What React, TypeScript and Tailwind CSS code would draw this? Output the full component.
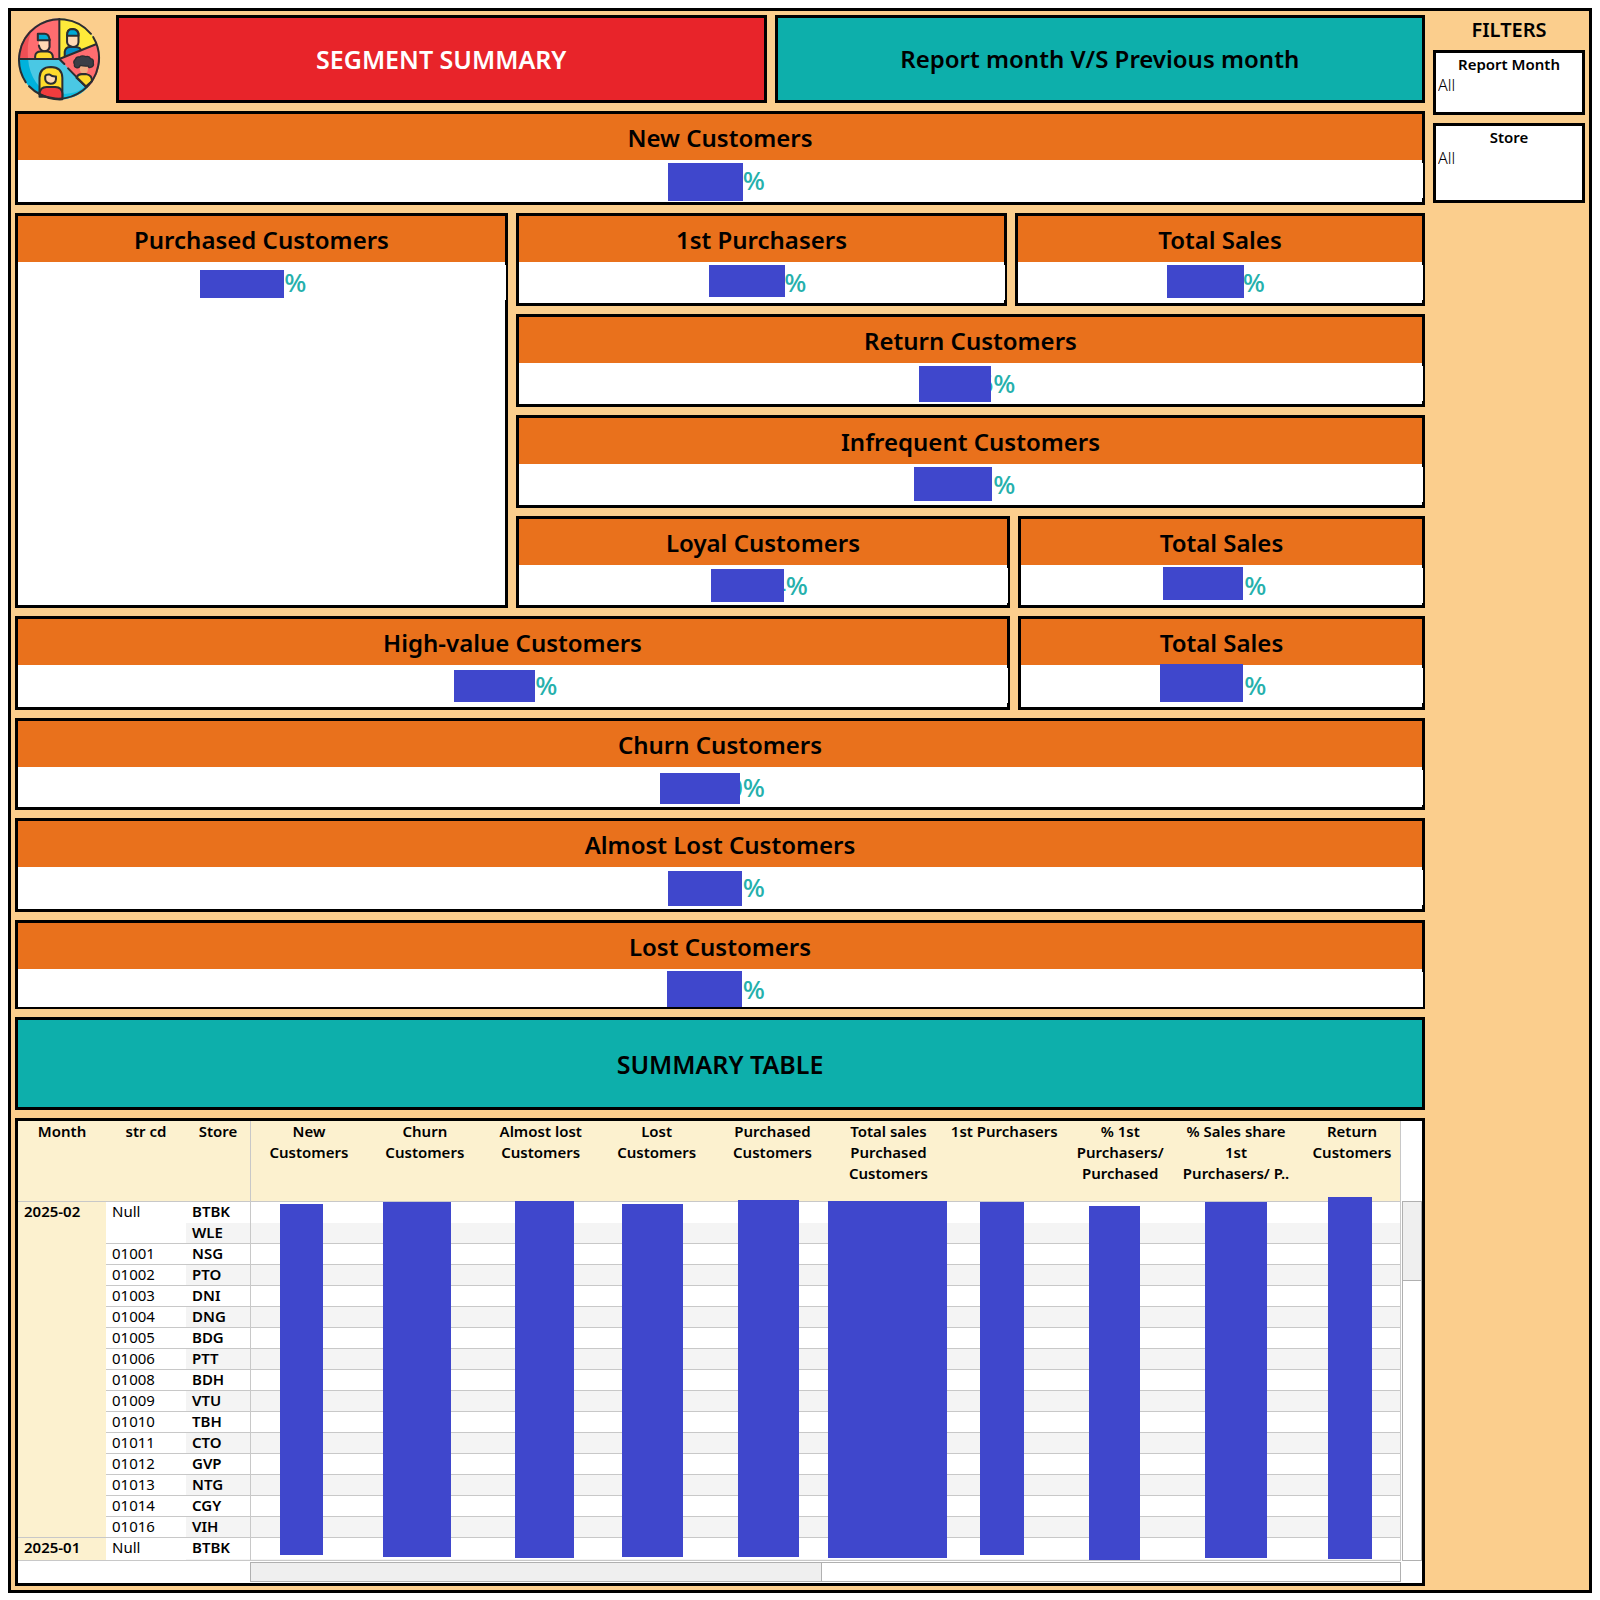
import React from "react";

type Mask = { left: number; top: number; width: number; height: number };

type CardProps = {
  title: string;
  value?: string;
  mask: Mask;
  bodyClass?: string;
  className?: string;
};

function MetricCard({ title, value = "%", mask, bodyClass = "h-[41px]", className = "" }: CardProps) {
  return (
    <section className={`min-w-0 border-[3px] border-black bg-white ${className}`}>
      <h2 className="h-[46px] bg-[#e9711c] text-center text-[24px] leading-[48px] font-semibold whitespace-nowrap">
        {title}
      </h2>
      <div className={bodyClass}>
        <div className="-mr-px h-[38px] pt-[3px]">
          <div className="mr-px h-[35px] bg-white shadow-[1px_0_0_#fff]">
            <div className="relative mx-auto w-[90px] text-right text-[26px] leading-[35px] font-medium text-[#25b0ac]">
              {value}
              <span
                className="absolute bg-[#3f47cc]"
                style={{ left: mask.left, top: mask.top - 3, width: mask.width, height: mask.height }}
              />
            </div>
          </div>
        </div>
      </div>
    </section>
  );
}

function Logo() {
  return (
    <svg viewBox="23 23 250 250" className="h-[84px] w-[84px]" role="img" aria-label="Customer segments">
      <defs>
        <clipPath id="disc">
          <circle cx="148" cy="148" r="121" />
        </clipPath>
      </defs>
      <g clipPath="url(#disc)">
        <rect x="20" y="20" width="256" height="256" fill="#4ac8e4" />
        <path d="M20 148H56C60 205 92 245 150 276H20Z" fill="#00b2dc" />
        <path d="M160 252C190 250 210 245 225 228L240 260L160 276Z" fill="#12bfe3" />
        <path d="M150 20H20V148H150Z" fill="#ff6d70" />
        <path d="M92 30C60 60 52 100 56 148H20V20Z" fill="#ef4f55" />
        <path d="M150 148V20H240L262 103Z" fill="#feea3a" />
        <path d="M150 148L258 104L280 104V200L228 234Z" fill="#ff6d70" />
        <path d="M262 104C268 150 262 180 246 210L228 234L280 210V104Z" fill="#ef4f55" />
      </g>
      <g stroke="#2b2d31" strokeWidth="6" strokeLinecap="round" strokeLinejoin="round" fill="none">
        <path d="M88 92V108C88 116 91 125 103 125Q117 125 117 112V92Z" fill="#ffd9b3" stroke="none" />
        <path d="M85 92V73H105Q118 73 120 90V92Z" fill="#00a9d4" />
        <path d="M120 90V112Q117 125 103 125Q91 123 88 108" />
        <path d="M77 146V140Q78 126 94 126H114Q130 127 130 146" fill="#feda2e" />
        <path d="M172 79Q171 59 189 59Q207 61 206 79V98Q205 112 189 112Q173 110 172 98Z" fill="#ffd9b3" />
        <path d="M172 79Q171 59 189 59Q207 61 206 79Z" fill="#00a9d4" />
        <path d="M165 139V127Q167 112 181 112H198Q212 113 213 122Z" fill="#008fc8" stroke="none" />
        <path d="M165 139V127Q167 112 181 112H198Q212 113 213 122" />
        <path d="M90 246V204Q91 172 124 172Q157 173 158 204V260H90Z" fill="#fedb2c" />
        <path d="M107 200Q108 193 120 194Q128 201 139 200V208Q138 222 123 222Q108 220 107 208Z" fill="#ffd9b3" />
        <path d="M90 252Q91 231 111 231H137Q157 232 158 250V268Q120 270 90 252Z" fill="#f13c3e" />
        <path d="M210 168H234V181Q233 192 222 192Q211 190 210 181Z" fill="#efae83" stroke="none" />
        <path d="M200 204Q204 193 216 193H229Q247 196 246 214L228 230Z" fill="#feda2e" />
        <path
          d="M201 174Q192 173 194 164Q189 155 197 149Q199 140 209 142Q217 136 227 141Q239 138 242 147Q252 149 250 159Q253 171 241 173Q236 175 235 169Q222 170 211 167Q209 175 201 174Z"
          fill="#3b3e46"
          strokeWidth="4"
        />
        <path d="M29 148H149V29M149 148L258 104M149 148L164 163M175 176L230 232" />
        <path d="M49 217A121 121 0 0 1 243 73M250 83A121 121 0 0 1 59 229" />
      </g>
    </svg>
  );
}

function Filter({ id, label, className }: { id: string; label: string; className: string }) {
  return (
    <div className={`flex flex-col border-[3px] border-black bg-white ${className}`}>
      <label htmlFor={id} className="block pt-px text-center text-[15px] leading-[20px] font-semibold">
        {label}
      </label>
      <select id={id} className="w-full appearance-none bg-transparent px-[2px] text-[16px] leading-[22px] font-light">
        <option>All</option>
      </select>
    </div>
  );
}

const columns: string[][] = [
  ["New", "Customers"],
  ["Churn", "Customers"],
  ["Almost lost", "Customers"],
  ["Lost", "Customers"],
  ["Purchased", "Customers"],
  ["Total sales", "Purchased", "Customers"],
  ["1st Purchasers"],
  ["% 1st", "Purchasers/", "Purchased"],
  ["% Sales share", "1st", "Purchasers/ P.."],
  ["Return", "Customers"],
];

const rows: [string, string][] = [
  ["Null", "BTBK"],
  ["", "WLE"],
  ["01001", "NSG"],
  ["01002", "PTO"],
  ["01003", "DNI"],
  ["01004", "DNG"],
  ["01005", "BDG"],
  ["01006", "PTT"],
  ["01008", "BDH"],
  ["01009", "VTU"],
  ["01010", "TBH"],
  ["01011", "CTO"],
  ["01012", "GVP"],
  ["01013", "NTG"],
  ["01014", "CGY"],
  ["01016", "VIH"],
];

const columnMasks: Mask[] = [
  { left: 262, top: 83, width: 43, height: 351 },
  { left: 365, top: 81, width: 68, height: 355 },
  { left: 497, top: 80, width: 59, height: 357 },
  { left: 604, top: 83, width: 61, height: 353 },
  { left: 720, top: 79, width: 61, height: 357 },
  { left: 810, top: 80, width: 119, height: 357 },
  { left: 962, top: 81, width: 44, height: 353 },
  { left: 1071, top: 85, width: 51, height: 354 },
  { left: 1187, top: 81, width: 62, height: 356 },
  { left: 1310, top: 76, width: 44, height: 362 },
];

function SummaryTable() {
  return (
    <section className="flex border-[3px] border-black bg-white">
      <div className="min-w-0 flex-1">
        <div className="relative h-[440px] overflow-hidden border-r border-b border-[#c8c8c8]">
          <table className="w-[1392px] table-fixed border-separate border-spacing-0 text-left text-[15px] leading-[18px]">
            <thead>
              <tr className="h-[81px] bg-[#fcf1cf] text-center align-top leading-[21px]">
                <th scope="col" className="w-[88px] border-b border-[#c8c8c8] p-0 font-semibold">Month</th>
                <th scope="col" className="w-[80px] border-b border-[#c8c8c8] p-0 font-semibold">str cd</th>
                <th scope="col" className="w-[65px] border-r border-b border-[#c8c8c8] p-0 font-semibold">Store</th>
                {columns.map((lines, i) => (
                  <th key={i} scope="col" className="border-b border-[#c8c8c8] p-0 font-semibold whitespace-nowrap">
                    {lines.map((line) => (
                      <span key={line} className="block">{line}</span>
                    ))}
                  </th>
                ))}
              </tr>
            </thead>
            <tbody className="align-top">
              {rows.map(([code, store], i) => {
                const line = i === 0 ? "" : "border-b border-[#c8c8c8]";
                const shade = i % 2 === 1 ? "bg-[#f4f4f4]" : "bg-white";
                return (
                  <tr key={store} className="h-[21px] align-top">
                    {i === 0 && (
                      <th scope="rowgroup" rowSpan={16} className="border-b border-[#c8c8c8] bg-[#fcf1cf] p-0 pl-[6px] align-top font-semibold">
                        2025-02
                      </th>
                    )}
                    {i !== 1 && (
                      <td rowSpan={i === 0 ? 2 : 1} className="border-b border-[#c8c8c8] bg-white p-0 pl-[6px] align-top">
                        {code}
                      </td>
                    )}
                    <th scope="row" className={`border-r border-r-[#c8c8c8] p-0 pl-[6px] align-top font-semibold ${line} ${shade}`}>{store}</th>
                    {columns.map((_, c) => (
                      <td key={c} className={`p-0 ${line} ${shade}`} />
                    ))}
                  </tr>
                );
              })}
              <tr className="h-[21px] align-top">
                <th scope="rowgroup" className="bg-[#fcf1cf] p-0 pl-[6px] align-top font-semibold">2025-01</th>
                <td className="p-0 pl-[6px] align-top">Null</td>
                <th scope="row" className="border-r border-[#c8c8c8] p-0 pl-[6px] align-top font-semibold">BTBK</th>
                <td colSpan={10} className="p-0" />
              </tr>
              <tr className="h-[21px]">
                <td className="bg-[#fcf1cf] p-0" />
                <td className="p-0" />
                <td className="border-r border-[#c8c8c8] bg-[#f4f4f4] p-0" />
                <td colSpan={10} className="bg-[#f4f4f4] p-0" />
              </tr>
            </tbody>
          </table>
          {columnMasks.map((m, i) => (
            <span key={i} className="absolute bg-[#3f47cc]" style={m} />
          ))}
        </div>
        <div className="mt-px mb-px ml-[232px] flex h-[20px] border border-[#b0b0b0]">
          <div className="w-[571px] border-r border-[#b0b0b0] bg-[#efefef]" />
        </div>
      </div>
      <div className="ml-px w-[20px]">
        <div className="mt-[80px] h-[360px] border border-[#b0b0b0]">
          <div className="h-[79px] border-b border-[#b0b0b0] bg-[#efefef]" />
        </div>
      </div>
    </section>
  );
}

const banner = "flex items-center justify-center border-[3px] border-black leading-[30px] font-semibold whitespace-nowrap";

export default function App() {
  return (
    <div className="bg-white p-2 font-['Noto_Sans',sans-serif] text-black">
      <div className="flex gap-2 border-[3px] border-black bg-[#fbce8d] p-1">
        <main className="flex min-w-0 flex-1 flex-col gap-2">
          <header className="flex h-[88px] gap-2">
            <div className="w-[93px] pt-[2px] pl-[2px]">
              <Logo />
            </div>
            <h1 className={`${banner} flex-1 bg-[#e8242a] text-[25px] text-white`}>SEGMENT SUMMARY</h1>
            <div className={`${banner} flex-1 bg-[#0dafab] text-[24px]`}>Report month V/S Previous month</div>
          </header>

          <MetricCard title="New Customers" bodyClass="h-[42px]" mask={{ left: -7, top: 3, width: 75, height: 38 }} />

          <div className="grid grid-cols-[493fr_909fr] gap-2">
            <MetricCard title="Purchased Customers" mask={{ left: -17, top: 8, width: 84, height: 28 }} />
            <div className="flex min-w-0 flex-col gap-2">
              <div className="grid grid-cols-[491fr_410fr] gap-2">
                <MetricCard title="1st Purchasers" mask={{ left: -8, top: 3, width: 76, height: 32 }} />
                <MetricCard title="Total Sales" mask={{ left: -8, top: 3, width: 77, height: 33 }} />
              </div>
              <MetricCard title="Return Customers" value="6%" mask={{ left: -7, top: 3, width: 72, height: 36 }} />
              <MetricCard title="Infrequent Customers" mask={{ left: -12, top: 3, width: 78, height: 34 }} />
              <div className="grid grid-cols-[494fr_407fr] gap-2">
                <MetricCard title="Loyal Customers" value="4%" bodyClass="h-[40px]" mask={{ left: -7, top: 4, width: 73, height: 33 }} />
                <MetricCard title="Total Sales" bodyClass="h-[40px]" mask={{ left: -14, top: 2, width: 80, height: 33 }} />
              </div>
            </div>
          </div>

          <div className="grid grid-cols-[995fr_407fr] gap-2">
            <MetricCard title="High-value Customers" bodyClass="h-[42px]" mask={{ left: -14, top: 5, width: 81, height: 32 }} />
            <MetricCard title="Total Sales" bodyClass="h-[42px]" mask={{ left: -17, top: -1, width: 83, height: 38 }} />
          </div>

          <MetricCard title="Churn Customers" value="0%" bodyClass="h-[40px]" mask={{ left: -15, top: 6, width: 80, height: 31 }} />
          <MetricCard title="Almost Lost Customers" bodyClass="h-[42px]" mask={{ left: -7, top: 4, width: 74, height: 35 }} />
          <MetricCard title="Lost Customers" bodyClass="h-[38px]" className="border-b-2" mask={{ left: -8, top: 2, width: 75, height: 36 }} />

          <h2 className={`${banner} h-[93px] bg-[#0dafab] text-[25px]`}>SUMMARY TABLE</h2>

          <SummaryTable />
        </main>

        <aside className="flex w-[152px] shrink-0 flex-col gap-2">
          <h2 className="h-[27px] text-center text-[20px] leading-[30px] font-semibold">FILTERS</h2>
          <Filter id="report-month" label="Report Month" className="h-[65px]" />
          <Filter id="store" label="Store" className="h-[80px]" />
        </aside>
      </div>
    </div>
  );
}
